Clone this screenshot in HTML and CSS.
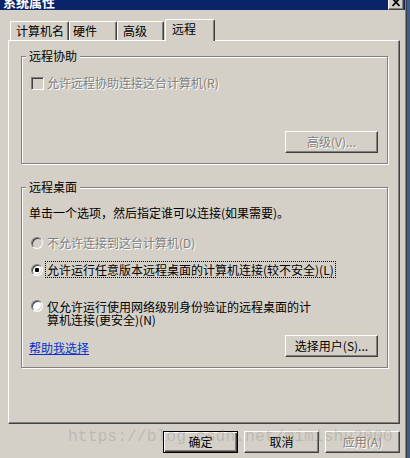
FILE: index.html
```html
<!DOCTYPE html>
<html lang="zh-CN">
<head>
<meta charset="utf-8">
<title>系统属性</title>
<link rel="stylesheet" href="styles.css">
</head>
<body>
<div class="window">
  <div class="titlebar">
    <span class="title">系统属性</span>
    <span class="close"><svg width="16" height="10" viewBox="0 0 16 10"><path d="M4.5 -1.5 L11.5 6 M11.5 -1.5 L4.5 6" stroke="#000" stroke-width="1.8" fill="none"/></svg></span>
  </div>
  <div class="tabs">
    <div class="tab t1">计算机名</div>
    <div class="tab t2">硬件</div>
    <div class="tab t3">高级</div>
    <div class="tab active">远程</div>
  </div>
  <div class="panel">
    <div class="group g1">
      <div class="legend">远程协助</div>
      <div class="check-row disabled">
        <span class="checkbox"></span>
        <span class="label">允许远程协助连接这台计算机(R)</span>
      </div>
      <div class="btn-row">
        <button class="btn wide disabled">高级(V)...</button>
      </div>
    </div>
    <div class="group g2">
      <div class="legend">远程桌面</div>
      <div class="intro">单击一个选项，然后指定谁可以连接(如果需要)。</div>
      <div class="radio-row r1 disabled">
        <span class="radio"></span>
        <span class="label">不允许连接到这台计算机(D)</span>
      </div>
      <div class="radio-row r2">
        <span class="radio checked"></span>
        <span class="label focus">允许运行任意版本远程桌面的计算机连接(较不安全)(L)</span>
      </div>
      <div class="radio-row r3">
        <span class="radio"></span>
        <span class="label wrap">仅允许运行使用网络级别身份验证的远程桌面的计算机连接(更安全)(N)</span>
      </div>
      <div class="bottom-row">
        <a class="link" href="#">帮助我选择</a>
        <button class="btn wide">选择用户(S)...</button>
      </div>
    </div>
  </div>
  <div class="footer">
    <button class="btn default">确定</button>
    <button class="btn">取消</button>
    <button class="btn disabled">应用(A)</button>
  </div>
  <div class="watermark">https://blog.csdn.net/mimishu2000</div>
</div>
<div class="desktop"></div>
</body>
</html>
```
FILE: styles.css
```css
html, body {
  margin: 0;
  padding: 0;
}
body {
  width: 410px;
  height: 458px;
  overflow: hidden;
  display: flex;
  background: #3a5f8f;
  font-family: "Noto Sans CJK SC", "Noto Sans", sans-serif;
  font-size: 12px;
  color: #000;
}
.window {
  position: relative;
  width: 407px;
  height: 458px;
  box-sizing: border-box;
  background: #d4d0c8;
  border-right: 1px solid #404040;
  box-shadow: inset -1px 0 0 #808080;
}
.desktop {
  flex: 1;
}
.titlebar {
  height: 10px;
  overflow: hidden;
  background: #0a246a;
  display: flex;
  justify-content: space-between;
  align-items: flex-start;
  margin-right: 1px;
}
.title {
  display: block;
  margin: -6px 0 0 3px;
  font-size: 13px;
  line-height: 16px;
  font-weight: bold;
  color: #fff;
}
.close {
  display: block;
  width: 16px;
  height: 10px;
  margin-right: 1px;
  box-sizing: border-box;
  background: #d4d0c8;
  border-left: 1px solid #fff;
  border-right: 1px solid #404040;
  border-bottom: 1px solid #404040;
  box-shadow: inset -1px -1px 0 #808080;
}
.close svg {
  display: block;
  margin-left: -1px;
}
.tabs {
  display: flex;
  align-items: flex-end;
  height: 21px;
  margin-top: 9px;
  padding-left: 10px;
  position: relative;
  z-index: 1;
}
.tab {
  box-sizing: border-box;
  height: 19px;
  line-height: 17px;
  padding-left: 4px;
  border-top: 1px solid #fff;
  border-left: 1px solid #fff;
  border-right: 1px solid #404040;
  border-radius: 2px 2px 0 0;
  box-shadow: inset -1px 0 0 #808080;
  background: #d4d0c8;
  white-space: nowrap;
}
.t1 { width: 59px; padding-left: 5px; }
.t2 { width: 48px; padding-left: 3px; }
.t3 { width: 47px; padding-left: 5px; }
.tab.active {
  width: 50px;
  height: 22px;
  margin-left: 1px;
  margin-bottom: -1px;
  padding-left: 6px;
  line-height: 18px;
}
.panel {
  margin-left: 8px;
  width: 392px;
  height: 384px;
  box-sizing: border-box;
  border-top: 1px solid #fff;
  border-left: 1px solid #fff;
  border-right: 1px solid #404040;
  border-bottom: 1px solid #404040;
  box-shadow: inset -1px -1px 0 #808080;
  padding: 15px 11px 0 12px;
}
.group {
  border: 1px solid #808080;
  box-shadow: inset 1px 1px 0 #fff, 1px 1px 0 #fff;
  padding: 0 9px 10px 7px;
}
.g2 {
  margin-top: 23px;
}
.legend {
  width: fit-content;
  margin: -9px 0 0 -3px;
  padding: 0 3px;
  line-height: 16px;
  background: #d4d0c8;
}
.disabled .label,
.btn.disabled {
  color: #808080;
  text-shadow: 1px 1px 0 #fff;
}
.check-row {
  display: flex;
  align-items: center;
  margin-top: 12px;
  padding-left: 2px;
  line-height: 14px;
}
.checkbox {
  width: 13px;
  height: 13px;
  box-sizing: border-box;
  border-top: 1px solid #808080;
  border-left: 1px solid #808080;
  border-right: 1px solid #fff;
  border-bottom: 1px solid #fff;
  box-shadow: inset 1px 1px 0 #404040, inset -1px -1px 0 #d4d0c8;
  background: #d4d0c8;
  margin-right: 3px;
  flex: none;
}
.btn-row {
  display: flex;
  justify-content: flex-end;
  margin-top: 41px;
}
.btn {
  width: 75px;
  height: 22px;
  box-sizing: border-box;
  margin: 0;
  padding: 0;
  background: #d4d0c8;
  font-family: inherit;
  font-size: 12px;
  line-height: 18px;
  color: #000;
  border: 1px solid;
  border-color: #fff #404040 #404040 #fff;
  box-shadow: inset -1px -1px 0 #808080;
  border-radius: 0;
  white-space: nowrap;
}
.btn.wide {
  width: 93px;
}
.btn.default {
  border-color: #000;
  box-shadow: inset 1px 1px 0 #fff, inset -1px -1px 0 #404040, inset -2px -2px 0 #808080;
}
.intro {
  margin-top: 11px;
  line-height: 14px;
}
.radio-row {
  display: flex;
  align-items: flex-start;
  padding-left: 2px;
  line-height: 14px;
}
.r1 { margin-top: 16px; }
.r2 { margin-top: 13px; }
.r3 { margin-top: 23px; line-height: 13px; }
.radio {
  position: relative;
  flex: none;
  width: 12px;
  height: 12px;
  box-sizing: border-box;
  margin: 1px 4px 0 0;
  border-radius: 50%;
  border: 1px solid;
  border-color: #808080 #fff #fff #808080;
  box-shadow: inset 1px 1px 0 #404040, inset -1px -1px 0 #d4d0c8;
  background: #fff;
}
.r3 .radio { margin-top: 0; }
.disabled .radio {
  background: #d4d0c8;
}
.radio.checked::after {
  content: "";
  position: absolute;
  left: 3px;
  top: 3px;
  width: 4px;
  height: 4px;
  border-radius: 1px;
  background: #000;
}
.label.focus {
  outline: 1px dotted #000;
  outline-offset: 0;
  margin-left: -1px;
  padding: 1px 1px 0;
  margin-top: -1px;
}
.label.wrap {
  max-width: 270px;
}
.bottom-row {
  display: flex;
  justify-content: space-between;
  align-items: center;
  margin-top: 9px;
}
.link {
  color: #0033cc;
  text-decoration: underline;
  line-height: 14px;
  margin-top: 3px;
}
.footer {
  display: flex;
  justify-content: flex-end;
  gap: 6px;
  margin-top: 7px;
  padding-right: 6px;
}
.watermark {
  position: absolute;
  left: 68px;
  top: 427px;
  font-family: "Liberation Mono", monospace;
  font-size: 16.4px;
  line-height: 20px;
  color: rgba(120, 120, 120, 0.28);
  white-space: nowrap;
  pointer-events: none;
}
```
